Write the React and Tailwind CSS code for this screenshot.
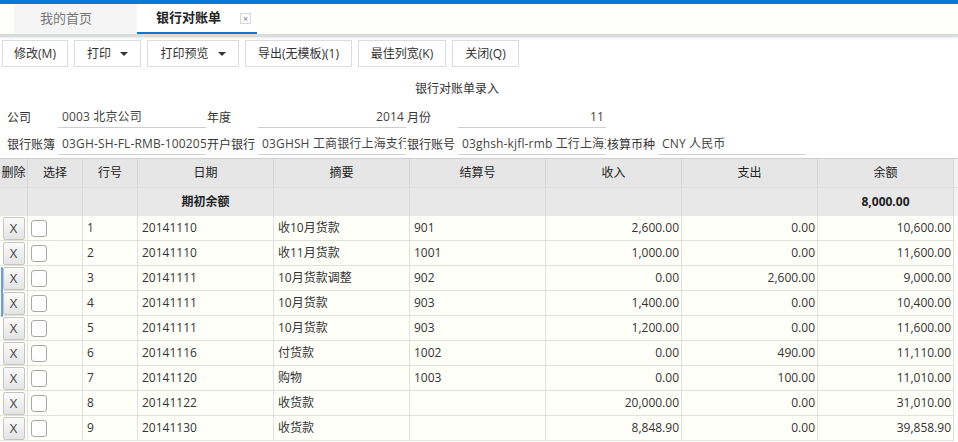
import React from 'react';

const font = { fontFamily: '"Open Sans", "Noto Sans CJK SC", sans-serif' };

const rows = [
  ['1', '20141110', '收10月货款', '901', '2,600.00', '0.00', '10,600.00'],
  ['2', '20141110', '收11月货款', '1001', '1,000.00', '0.00', '11,600.00'],
  ['3', '20141111', '10月货款调整', '902', '0.00', '2,600.00', '9,000.00'],
  ['4', '20141111', '10月货款', '903', '1,400.00', '0.00', '10,400.00'],
  ['5', '20141111', '10月货款', '903', '1,200.00', '0.00', '11,600.00'],
  ['6', '20141116', '付货款', '1002', '0.00', '490.00', '11,110.00'],
  ['7', '20141120', '购物', '1003', '0.00', '100.00', '11,010.00'],
  ['8', '20141122', '收货款', '', '20,000.00', '0.00', '31,010.00'],
  ['9', '20141130', '收货款', '', '8,848.90', '0.00', '39,858.90'],
];

const cols = 'grid grid-cols-[28px_55px_55px_136px_136px_136px_136px_136px_136px_4px]';

const Caret = () => (
  <span className="ml-[9px] inline-block w-0 h-0 border-l-[4px] border-r-[4px] border-t-[4px] border-l-transparent border-r-transparent border-t-[#333]" />
);

const ToolButton = ({ w, children, caret }) => (
  <button className={`${w} h-[27px] border border-[#dcdcdc] bg-white text-[12px] text-[#333] flex items-center justify-center`}>
    {children}
    {caret && <Caret />}
  </button>
);

const Field = ({ label, value, right }) => (
  <div className="flex items-end h-[22px]">
    <div className="w-[52px] pl-px text-[12px] text-[#333] leading-[20px] whitespace-nowrap">{label}</div>
    <div
      className={`w-[148px] h-[22px] border-b border-[#cfcfcf] text-[12px] text-[#444] leading-[21px] overflow-hidden whitespace-nowrap tracking-[0.15px] ${right ? 'text-right pr-[2px]' : 'pl-[4px]'}`}
    >
      {value}
    </div>
  </div>
);

const HeadCell = ({ children, bold }) => (
  <div className={`border-r border-[#d6d6d6] flex items-center justify-center text-[12px] text-[#222] ${bold ? 'font-bold' : ''}`}>
    {children}
  </div>
);

const Cell = ({ children, right }) => (
  <div className={`border-r border-b border-[#e2e2dc] flex items-center text-[12px] text-[#333] whitespace-nowrap overflow-hidden ${right ? 'justify-end pr-[2px]' : 'pl-[4px]'}`}>
    {children}
  </div>
);

export default function App() {
  return (
    <div className="w-[958px] h-[442px] overflow-hidden bg-white relative" style={font}>
      <div className="h-1 bg-[#0a78d6]" />

      {/* tabs */}
      <div className="h-[30px] flex bg-[#fefefb] pl-[14px]">
        <div className="w-[123px] bg-[#f5f5f5] flex items-center pl-[26px] text-[13px] text-[#777]">我的首页</div>
        <div className="w-[120px] bg-white border-b-2 border-[#0a78d6] flex items-center text-[13px] font-bold text-[#222] pl-[19px]">
          银行对账单
          <span className="ml-[19px] w-[11px] h-[11px] border border-[#d8d8d8] flex items-center justify-center text-[9px] leading-none text-[#999]">×</span>
        </div>
      </div>
      <div className="h-[3px] bg-[#d9dcdc] shadow-[0_1px_2px_#e8eaea]" />

      {/* toolbar */}
      <div className="flex gap-[6px] pl-[2px] pt-[3px]">
        <ToolButton w="w-[66px]">修改(M)</ToolButton>
        <ToolButton w="w-[67px]" caret>打印</ToolButton>
        <ToolButton w="w-[92px]" caret>打印预览</ToolButton>
        <ToolButton w="w-[107px]">导出(无模板)(1)</ToolButton>
        <ToolButton w="w-[88px]">最佳列宽(K)</ToolButton>
        <ToolButton w="w-[67px]">关闭(Q)</ToolButton>
      </div>

      <div className="w-[914px] pt-[14px] h-[30px] text-center text-[12px] leading-[16px] text-[#333]">银行对账单录入</div>

      {/* form */}
      <div className="pl-[6px] mt-[9px] flex flex-col gap-[5px]">
        <div className="flex">
          <Field label="公司" value="0003 北京公司" />
          <Field label="年度" value="2014" right />
          <Field label="月份" value="11" right />
        </div>
        <div className="flex">
          <Field label="银行账簿" value="03GH-SH-FL-RMB-100205" />
          <Field label="开户银行" value="03GHSH 工商银行上海支行" />
          <Field label="银行账号" value="03ghsh-kjfl-rmb 工行上海支行" />
          <Field label="核算币种" value="CNY 人民币" />
        </div>
      </div>

      {/* grid */}
      <div className="mt-[3px] border-t border-[#cfcfcf]">
        <div className={`${cols} h-[29px] bg-[#e6e6e6] border-b border-[#dedede]`}>
          <HeadCell>删除</HeadCell>
          <HeadCell>选择</HeadCell>
          <HeadCell>行号</HeadCell>
          <HeadCell>日期</HeadCell>
          <HeadCell>摘要</HeadCell>
          <HeadCell>结算号</HeadCell>
          <HeadCell>收入</HeadCell>
          <HeadCell>支出</HeadCell>
          <HeadCell>余额</HeadCell>
          <div className="bg-[#f2f2f2]" />
        </div>
        <div className={`${cols} h-[28px] bg-[#e8e8e8]`}>
          <HeadCell />
          <HeadCell />
          <HeadCell />
          <HeadCell bold>期初余额</HeadCell>
          <HeadCell />
          <HeadCell />
          <HeadCell />
          <HeadCell />
          <HeadCell bold>8,000.00</HeadCell>
          <div className="bg-[#f2f2f2]" />
        </div>
        {rows.map((r) => (
          <div key={r[0]} className={`${cols} h-[25px] bg-[#fffffa]`}>
            <div className="border-r border-b border-[#e2e2dc] flex items-center justify-center">
              <button className="w-[22px] h-[23px] rounded-[2px] border border-[#c4c4c4] bg-gradient-to-b from-[#fbfbfb] to-[#e4e4e4] text-[13px] text-[#444] leading-none">X</button>
            </div>
            <div className="border-r border-b border-[#e2e2dc] flex items-center pl-[3px]">
              <span className="w-[16px] h-[17px] rounded-[3px] border border-[#a8a8a8] bg-white" />
            </div>
            <Cell>{r[0]}</Cell>
            <Cell>{r[1]}</Cell>
            <Cell>{r[2]}</Cell>
            <Cell>{r[3]}</Cell>
            <Cell right>{r[4]}</Cell>
            <Cell right>{r[5]}</Cell>
            <Cell right>{r[6]}</Cell>
            <div className="bg-white" />
          </div>
        ))}
      </div>

      {/* focus marker */}
      <div className="absolute left-[1px] top-[267px] w-[2px] h-[50px] rounded-full bg-[#6d9fd8]" />
    </div>
  );
}
